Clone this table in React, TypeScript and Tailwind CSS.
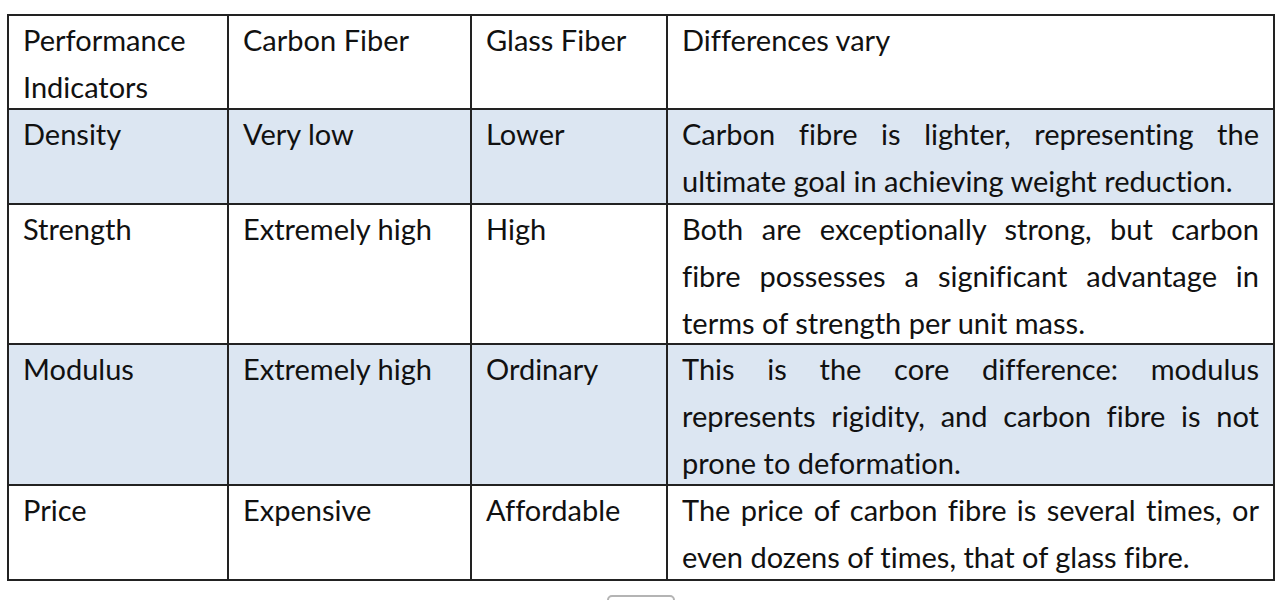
import React from "react";

type Row = {
  a: string[];
  b: string;
  c: string;
  d: string[];
  shaded: boolean;
  h: string;
};

const rows: Row[] = [
  {
    a: ["Performance", "Indicators"],
    b: "Carbon Fiber",
    c: "Glass Fiber",
    d: ["Differences vary"],
    shaded: false,
    h: "h-[94px]",
  },
  {
    a: ["Density"],
    b: "Very low",
    c: "Lower",
    d: [
      "Carbon fibre is lighter, representing the",
      "ultimate goal in achieving weight reduction.",
    ],
    shaded: true,
    h: "h-[95px]",
  },
  {
    a: ["Strength"],
    b: "Extremely high",
    c: "High",
    d: [
      "Both are exceptionally strong, but carbon",
      "fibre possesses a significant advantage in",
      "terms of strength per unit mass.",
    ],
    shaded: false,
    h: "h-[140px]",
  },
  {
    a: ["Modulus"],
    b: "Extremely high",
    c: "Ordinary",
    d: [
      "This is the core difference: modulus",
      "represents rigidity, and carbon fibre is not",
      "prone to deformation.",
    ],
    shaded: true,
    h: "h-[141px]",
  },
  {
    a: ["Price"],
    b: "Expensive",
    c: "Affordable",
    d: [
      "The price of carbon fibre is several times, or",
      "even dozens of times, that of glass fibre.",
    ],
    shaded: false,
    h: "h-[95px]",
  },
];

function Cell({
  children,
  shaded,
  h,
}: {
  children: React.ReactNode;
  shaded: boolean;
  h: string;
}) {
  return (
    <div
      className={`${h} border-r-2 border-b-2 border-[#222222] px-[14px] ${
        shaded ? "bg-[#dce6f2]" : "bg-white"
      }`}
    >
      {children}
    </div>
  );
}

export default function App() {
  return (
    <div
      className="min-h-[600px] w-[1280px] bg-white text-[#111111] text-[29px] leading-[47px] [font-variant-ligatures:none]"
      style={{ fontFamily: "Lato, 'Open Sans', sans-serif" }}
    >
      <div className="pt-[14px] pl-[7px]">
        <div className="grid w-[1268px] grid-cols-[220px_243px_196px_607px] border-l-2 border-t-2 border-[#222222]">
          {rows.map((r, i) => (
            <React.Fragment key={i}>
              <Cell shaded={r.shaded} h={r.h}>
                {r.a.map((t, j) => (
                  <div key={j} className="whitespace-nowrap">
                    {t}
                  </div>
                ))}
              </Cell>
              <Cell shaded={r.shaded} h={r.h}>
                <div className="whitespace-nowrap">{r.b}</div>
              </Cell>
              <Cell shaded={r.shaded} h={r.h}>
                <div className="whitespace-nowrap">{r.c}</div>
              </Cell>
              <Cell shaded={r.shaded} h={r.h}>
                {r.d.map((t, j) => (
                  <div
                    key={j}
                    className={
                      j < r.d.length - 1
                        ? "text-justify [text-align-last:justify]"
                        : "whitespace-nowrap"
                    }
                  >
                    {t}
                  </div>
                ))}
              </Cell>
            </React.Fragment>
          ))}
        </div>
        <div className="mt-[14px] ml-[600px] h-[30px] w-[68px] rounded-[5px] border-2 border-[#b4b4b4] bg-white" />
      </div>
    </div>
  );
}
